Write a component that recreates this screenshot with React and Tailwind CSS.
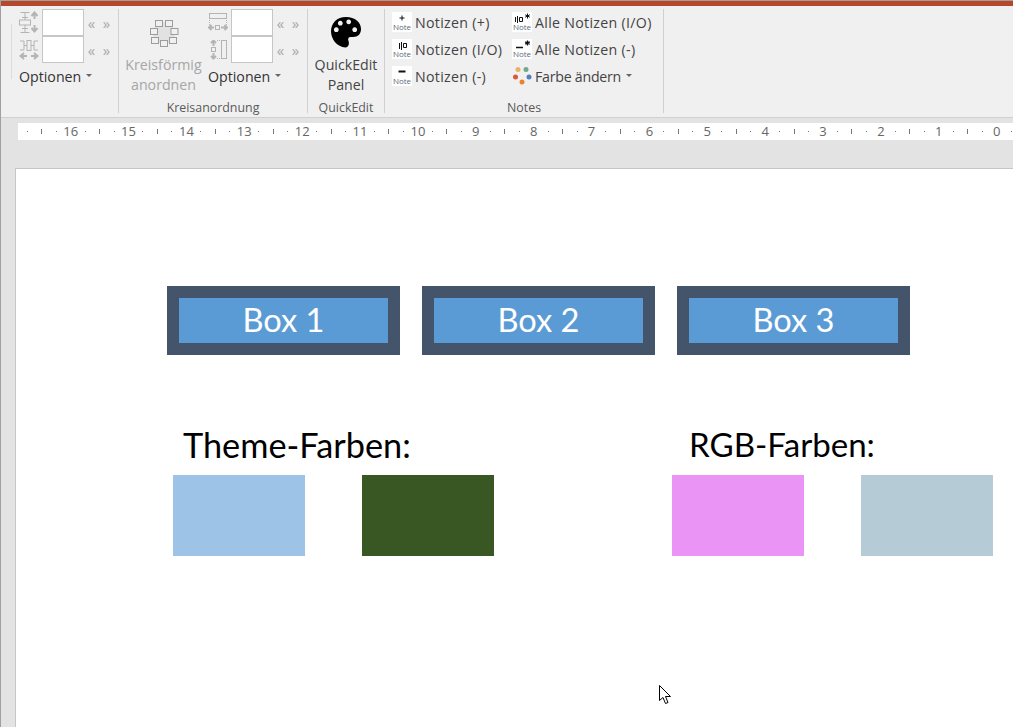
const G = "#b4b4b4";

function Caret() {
  return <span className="inline-block w-0 h-0 ml-[5px] mb-[2px] border-l-[3px] border-r-[3px] border-t-[3px] border-l-transparent border-r-transparent border-t-[#666666]" />;
}

function IconAlignV() {
  return (
    <svg width="20" height="23" viewBox="0 0 20 23" fill="none" stroke={G} strokeWidth="1">
      <path d="M1.5 1.5H10.5M6 1.5V6M3 6.5H9M6 6.5V9" />
      <rect x="0.5" y="9" width="11" height="5" />
      <path d="M6 14V17M3 17.5H9M6 17.5V21M1.5 21.5H10.5" />
      <path d="M15.5 8V2M12.5 5L15.5 1.5L18.5 5M15.5 14V20M12.5 17L15.5 20.5L18.5 17" strokeWidth="2" />
    </svg>
  );
}

function IconAlignH() {
  return (
    <svg width="20" height="20" viewBox="0 0 20 20" fill="none" stroke={G} strokeWidth="1">
      <path d="M1 1H5V10H1M5 5.5H8M12 5.5H15M19 1H15V10H19" />
      <rect x="8" y="0.5" width="4" height="10" />
      <path d="M2 16H8M5 13L1.5 16L5 19M12 16H18M15 13L18.5 16L15 19" strokeWidth="2" />
    </svg>
  );
}

function IconWidth() {
  return (
    <svg width="20" height="20" viewBox="0 0 20 20" fill="none" stroke={G} strokeWidth="1">
      <rect x="1.5" y="0.5" width="17" height="5" />
      <path d="M1.5 7V13M18.5 7V13" strokeDasharray="1 1" />
      <rect x="7.5" y="12.5" width="4" height="4" />
      <path d="M1 14.500H6M3.500 12L1 14.500L3.500 17M13 14.500H19M16.500 12L19 14.500L16.500 17" strokeWidth="2" />
    </svg>
  );
}

function IconHeight() {
  return (
    <svg width="20" height="20" viewBox="0 0 20 20" fill="none" stroke={G} strokeWidth="1">
      <rect x="13.5" y="0.500" width="5" height="18" />
      <path d="M9 0.500H13M9 18.500H13" strokeDasharray="1 1" />
      <rect x="3.500" y="7.500" width="4" height="4" />
      <path d="M5.500 6V1M3 3L5.500 0.500L8 3M5.500 13V18.500M3 16L5.500 18.500L8 16" strokeWidth="2" />
    </svg>
  );
}

function IconCircle() {
  const squares = [[9, 3.5], [19, 3.5], [4, 11.5], [24.5, 11.5], [5, 20.5], [14, 23.5], [23, 20.5]];
  return (
    <svg width="29" height="28" viewBox="0 0 29 28" fill="none">
      <circle cx="14" cy="13" r="11" fill="#e2e2e2" />
      {squares.map(([x, y]) => (
        <rect key={`${x}-${y}`} x={x - 3.5} y={y - 3} width="7" height="6" fill="#f0f0f0" stroke="#9c9c9c" />
      ))}
    </svg>
  );
}

function IconPalette() {
  return (
    <svg width="30" height="31" viewBox="0 0 30 31">
      <path
        fillRule="evenodd"
        fill="#000000"
        d="M15 0C24 0 30 5 30 12C30 17 27 20 22 20L19.500 20C17.500 20 16.500 22 17.500 24C18.500 26.500 17.500 30.500 14.500 30.500C6 30 0 22 0 14.500C0 6 6 0 15 0ZM9.300 3.800A2.400 2.400 0 1 0 9.301 3.800ZM17.700 2.500A2.400 2.400 0 1 0 17.701 2.500ZM5.300 10.300A2.400 2.400 0 1 0 5.301 10.300ZM23.700 10.300A2.400 2.400 0 1 0 23.701 10.300Z"
      />
    </svg>
  );
}

function IconColors() {
  const dots = [[6, 3.5, "#e8b463"], [14, 3.5, "#6fa98d"], [3.5, 11, "#d9573b"], [17, 11, "#4f83b8"], [10, 16, "#e9842c"]];
  return (
    <svg width="20" height="20" viewBox="0 0 20 20">
      {dots.map(([x, y, c]) => <circle key={c} cx={x} cy={y} r="2.500" fill={c} />)}
    </svg>
  );
}

function Glyph({ kind }) {
  return (
    <svg width="20" height="11" viewBox="0 0 20 11" fill="none" stroke="#111111">
      {kind === "plus" && <path d="M10 3.500V8.500M7.500 6H12.500" />}
      {kind === "minus" && <path d="M6.500 5.500H13.500" strokeWidth="2" />}
      {kind === "io" && <path d="M7.500 4V10M9.500 3V11M11.500 4.500H14.500V8.500H11.500Z" />}
      {kind === "allIo" && <path d="M3.500 5V10M5.500 4V11M7.500 5.500H10.500V9.500H7.500ZM15.500 1.500V6.500M13.200 2.800L17.800 5.200M17.800 2.800L13.200 5.200" />}
      {kind === "allMinus" && <path d="M4 8.500H11M15.500 1.500V6.500M13.200 2.800L17.800 5.200M17.800 2.800L13.200 5.200" strokeWidth="1.300" />}
    </svg>
  );
}

function NoteTile({ kind }) {
  return (
    <div className="w-[20px] h-[20px] bg-white flex flex-col items-center shrink-0">
      <Glyph kind={kind} />
      <span className="text-[8px] leading-[8px] tracking-normal text-[#5c6b7c] font-['Open_Sans',sans-serif]">Note</span>
    </div>
  );
}

function NoteRow({ icon, label, caret, tight }) {
  return (
    <div className="flex items-center h-[20px] mb-[7px] whitespace-nowrap">
      {icon}
      <span className={tight ? "ml-[3px] mt-[1px] text-[#444444] tracking-[-0.25px]" : "ml-[3px] mt-[1px] text-[#444444] tracking-[0.3px]"}>{label}</span>
      {caret && <Caret />}
    </div>
  );
}

function SpinRow({ icon }) {
  return (
    <div className="flex items-center h-[27px]">
      <div className="w-[23px] h-[27px] flex items-center">{icon}</div>
      <div className="w-[42px] h-[27px] bg-white border border-[#c6c6c6]" />
      <div className="flex text-[#a8a8a8] text-[15px] pt-[1px]">
        <span className="w-[15px] text-center">«</span>
        <span className="w-[15px] text-center">»</span>
      </div>
    </div>
  );
}

function Options() {
  return (
    <div className="h-[27px] flex items-center text-[#333333] whitespace-nowrap">
      Optionen
      <Caret />
    </div>
  );
}

function GroupLabel({ children }) {
  return <div className="h-[14px] leading-[18px] text-[12.4px] text-center text-[#5a5a5a] whitespace-nowrap">{children}</div>;
}

function Group({ w, label, children }) {
  return (
    <div className={`${w} h-[104px] flex flex-col border-r border-[#d0d0d0] shrink-0`}>
      <div className="h-[90px] flex">{children}</div>
      {label && <GroupLabel>{label}</GroupLabel>}
    </div>
  );
}

function Ribbon() {
  return (
    <div className="h-[112px] bg-[#f0f0f0] border-b border-[#d0d0d0] pt-[3px] flex font-['Open_Sans',sans-serif] text-[14.2px] shrink-0">
      <Group w="w-[118px]">
        <div className="ml-[10px] mt-[15px] w-px h-[55px] bg-[#dcdcdc]" />
        <div className="ml-[7px]">
          <SpinRow icon={<IconAlignV />} />
          <SpinRow icon={<IconAlignH />} />
          <Options />
        </div>
      </Group>
      <Group w="w-[189px]" label="Kreisanordnung">
        <div className="ml-[6px] w-[77px] flex flex-col items-center text-[#a6a6a6] leading-[20px] whitespace-nowrap">
          <div className="mt-[11px] mb-[7px] h-[28px] ml-[1px]"><IconCircle /></div>
          <span>Kreisförmig</span>
          <span>anordnen</span>
        </div>
        <div className="ml-[6px]">
          <SpinRow icon={<IconWidth />} />
          <SpinRow icon={<IconHeight />} />
          <Options />
        </div>
      </Group>
      <Group w="w-[77px]" label="QuickEdit">
        <div className="w-full flex flex-col items-center text-[#444444] leading-[20px]">
          <div className="mt-[8px] mb-[7px] h-[31px]"><IconPalette /></div>
          <span>QuickEdit</span>
          <span>Panel</span>
        </div>
      </Group>
      <Group w="w-[279px]" label="Notes">
        <div className="ml-[7px] pt-[3px] w-[120px]">
          <NoteRow icon={<NoteTile kind="plus" />} label="Notizen (+)" />
          <NoteRow icon={<NoteTile kind="io" />} label="Notizen (I/O)" />
          <NoteRow icon={<NoteTile kind="minus" />} label="Notizen (-)" />
        </div>
        <div className="pt-[3px]">
          <NoteRow icon={<NoteTile kind="allIo" />} label="Alle Notizen (I/O)" />
          <NoteRow icon={<NoteTile kind="allMinus" />} label="Alle Notizen (-)" />
          <NoteRow icon={<IconColors />} label="Farbe ändern" caret tight />
        </div>
      </Group>
    </div>
  );
}

function Quarter({ children }) {
  return <div className="w-[14.475px] shrink-0 flex items-center justify-center">{children}</div>;
}

const Dot = () => <span className="w-px h-px bg-[#777777] shrink-0" />;
const Tick = () => <span className="w-px h-[5px] bg-[#777777] shrink-0" />;

function Ruler() {
  const labels = [16, 15, 14, 13, 12, 11, 10, 9, 8, 7, 6, 5, 4, 3, 2, 1, 0];
  return (
    <div className="ml-[17px] mt-[5px] h-[17px] bg-white flex items-center pl-[2px] overflow-hidden font-['Open_Sans',sans-serif] text-[13px] text-[#666666] shrink-0">
      <Quarter><Dot /></Quarter>
      {labels.map((n) => (
        <div key={n} className="flex items-center shrink-0">
          <Quarter><Tick /></Quarter>
          <Quarter><Dot /></Quarter>
          <Quarter><span className="shrink-0">{n}</span></Quarter>
          <Quarter><Dot /></Quarter>
        </div>
      ))}
    </div>
  );
}

function Box({ children }) {
  return (
    <div className="w-[233px] h-[69px] border-[12px] border-[#44546a] bg-[#5b9bd5] flex items-center justify-center text-white text-[32.6px] leading-none">
      {children}
    </div>
  );
}

function Swatch({ color }) {
  return <div className={`w-[132px] h-[81px] ${color}`} />;
}

function Slide() {
  return (
    <div className="ml-[14px] mt-[28px] flex-1 bg-white border-l border-t border-[#c6c6c6] pt-[117px] font-['Lato',sans-serif]">
      <div className="ml-[151px] flex gap-[22px]">
        <Box>Box 1</Box>
        <Box>Box 2</Box>
        <Box>Box 3</Box>
      </div>
      <div className="ml-[167px] mt-[72px] mb-[12px] h-[36px] flex items-center leading-none text-black whitespace-nowrap">
        <span className="w-[506px] text-[34.3px]">Theme-Farben:</span>
        <span className="text-[33.1px]">RGB-Farben:</span>
      </div>
      <div className="ml-[157px] flex">
        <Swatch color="bg-[#9dc3e6]" />
        <div className="w-[57px]" />
        <Swatch color="bg-[#385723]" />
        <div className="w-[178px]" />
        <Swatch color="bg-[#ea94f5]" />
        <div className="w-[57px]" />
        <Swatch color="bg-[#b5cbd6]" />
      </div>
    </div>
  );
}

function Cursor() {
  return (
    <svg className="absolute left-[658px] top-[685px]" width="13" height="20" viewBox="0 0 13 20">
      <path d="M0.500 0.500V15.500L4 12.500L6.500 18.500L9 17.500L6.500 11.500H11.500Z" fill="#ffffff" stroke="#000000" strokeWidth="1" />
    </svg>
  );
}

export default function App() {
  return (
    <div className="relative w-[1013px] h-[727px] overflow-hidden bg-[#e3e3e3] border-l border-[#a0a0a0] flex flex-col">
      <div className="h-[6px] border-t border-[#a0a0a0] bg-[#b7472a] shrink-0" />
      <Ribbon />
      <Ruler />
      <Slide />
      <Cursor />
    </div>
  );
}
